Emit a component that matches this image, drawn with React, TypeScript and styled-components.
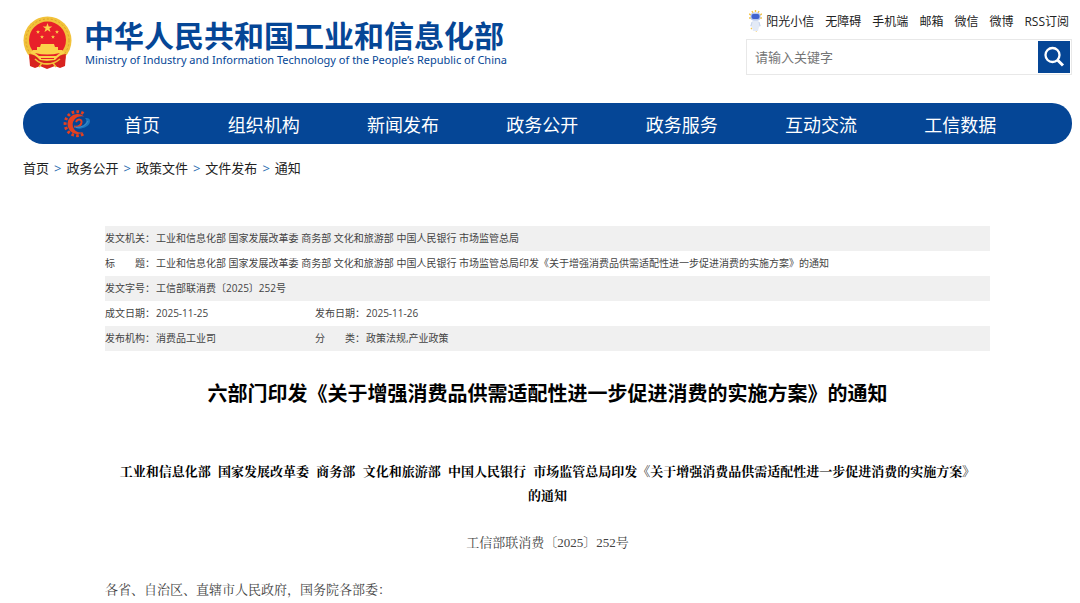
import React from 'react';
import styled, { createGlobalStyle } from 'styled-components';

const BLUE = '#054696';

const GlobalStyle = createGlobalStyle`
  * { box-sizing: border-box; }
  body {
    margin: 0;
    background: #fff;
    color: #222;
    font-family: "Open Sans", "Noto Sans CJK SC", sans-serif;
    font-size: 13px;
  }
  a { color: inherit; text-decoration: none; }
  h1, h2, p { margin: 0; }
`;

const Page = styled.div`
  padding: 0 8px 0 23px;
  height: 100vh;
  overflow: hidden;
`;

const Header = styled.header`
  display: flex;
  justify-content: space-between;
  align-items: flex-start;
  height: 103px;
`;

const Brand = styled.a`
  display: flex;
  gap: 12px;
  padding-top: 16px;
  color: ${BLUE};
`;

const BrandText = styled.div`
  display: flex;
  flex-direction: column;
`;

const BrandName = styled.span`
  font: 700 30px/36px "Noto Sans CJK SC", sans-serif;
  white-space: nowrap;
`;

const BrandEnglish = styled.span`
  font: 400 11px/16px "Noto Sans", sans-serif;
  padding-left: 1px;
  white-space: nowrap;
`;

const Tools = styled.div`
  width: 326px;
`;

const QuickLinks = styled.nav`
  display: flex;
  justify-content: flex-end;
  align-items: center;
  gap: 11px;
  height: 39px;
  padding: 2px 3px 0 0;
  font-size: 12px;
  white-space: nowrap;
`;

const MascotLink = styled.a`
  display: flex;
  align-items: center;
  gap: 4px;
`;

const Search = styled.form`
  display: flex;
  align-items: center;
  height: 36px;
  padding: 1px;
  border: 1px solid #e8e8e8;
`;

const SearchInput = styled.input`
  flex: 1;
  min-width: 0;
  height: 32px;
  padding: 0 7px 2px;
  border: 0;
  outline: 0;
  background: none;
  font: 13px "Noto Sans CJK SC", sans-serif;
  &::placeholder { color: #757575; }
`;

const SearchButton = styled.button`
  display: grid;
  place-items: center;
  width: 32px;
  height: 32px;
  padding: 0;
  border: 0;
  background: ${BLUE};
`;

const NavBar = styled.nav`
  display: flex;
  align-items: center;
  height: 41px;
  padding: 0 42px 0 40px;
  border-radius: 20px;
  background: ${BLUE};
  color: #fff;
  font-size: 18px;
`;

const NavHome = styled.a`
  display: flex;
  align-items: center;
  gap: 33px;
  width: 131px;
`;

const NavItem = styled.a`
  flex: 1;
  text-align: center;
`;

const Crumbs = styled.nav`
  display: flex;
  gap: 5px;
  padding-top: 14px;
  line-height: 20px;
`;

const CrumbArrow = styled.span`
  color: #2a6cb0;
`;

const Article = styled.main`
  margin: 48px 82px 0;
`;

const MetaTable = styled.table`
  width: 100%;
  border-collapse: collapse;
  table-layout: fixed;
  font-size: 10px;
  color: #444;
`;

const MetaRow = styled.tr`
  height: 25px;
  &:nth-child(odd) { background: #f0f0f0; }
`;

const MetaLabel = styled.th`
  padding: 0 0 2px;
  font-weight: 400;
  text-align: left;
  white-space: nowrap;
`;

const MetaValue = styled.td`
  padding: 0 0 2px;
  white-space: nowrap;
`;

const Title = styled.h1`
  padding-top: 28px;
  color: #000;
  font-size: 20px;
  line-height: 30px;
  text-align: center;
`;

const Body = styled.div`
  display: flex;
  flex-direction: column;
  gap: 23px;
  padding-top: 51px;
  font-family: "Liberation Serif", "Noto Serif CJK SC", "Noto Sans CJK SC", serif;
  line-height: 24px;
  color: #444;
`;

const Heading = styled.h2`
  padding: 0 12px;
  color: #000;
  font-size: 13px;
  text-align: center;
`;

const Issuer = styled.span`
  margin-right: 4px;
`;

const DocNumber = styled.p`
  text-align: center;
`;

const STAR = 'M0-5 1.2-1.6 4.8-1.6 1.9.6 3 4 0 1.9-3 4-1.9.6-4.8-1.6-1.2-1.6Z';

const Emblem = () => (
  <svg width="49" height="53" viewBox="0 0 49 53" aria-hidden="true">
    <path d="M6 38 7 50 12 52 17 50 24 53 32 50 37 52 42 50 43 38Z" fill="#d8231f" />
    <circle cx="24.5" cy="24.5" r="24" fill="#f2c23a" />
    <circle cx="24.5" cy="24.5" r="21.5" fill="none" stroke="#dba128" strokeWidth="1" strokeDasharray="2 2" />
    <circle cx="24.5" cy="24" r="18.5" fill="#e8202a" />
    <g fill="#fbd24a">
      <path d={STAR} transform="translate(24.5 12)" />
      <path d={STAR} transform="translate(15 16) scale(.42)" />
      <path d={STAR} transform="translate(34 16) scale(.42)" />
      <path d={STAR} transform="translate(19 21) scale(.42)" />
      <path d={STAR} transform="translate(30 21) scale(.42)" />
      <path d="M18 28h13l1 3h3v3H14v-3h3z" />
      <path d="M10 34h29l3 3-5 2-4 5H16l-4-5-5-2z" />
    </g>
    <path d="M12 37q12 3 25 0l-4 3H16z" fill="#e8202a" />
    <path d="M18 42h13v1H18z" fill="#e8202a" />
    <path d="M6 38q6 0 11 6l7 1 8-1q5-6 11-6l-2 12-6 1-5-4H19l-5 4-6-1z" fill="#d8231f" />
    <path d="M12 43q5 5 12 5t13-5M16 51l3-4M33 51l-3-4" fill="none" stroke="#f2c23a" strokeWidth="1.6" />
  </svg>
);

const Mascot = () => (
  <svg width="13" height="22" viewBox="0 0 13 22" fill="none" aria-hidden="true">
    <path d="M3 1l1 2M6.5 0v2M10 1 9 3M0 4l2 1M13 4l-2 1M0 8h2M11 8h2M6 20l2 1M2 18l1 1" stroke="#f5c445" strokeWidth="1.4" />
    <path d="M4 10h5l3 6-2 1-1 4H4l-1-4-2-1z" fill="#e3eaf6" />
    <path d="M3 12l-1 4M10 12l1 4" stroke="#c6d3ec" />
    <rect x="1.5" y="2.5" width="10" height="8" rx="3.5" fill="#b8c8ee" />
    <rect x="2.5" y="4" width="8" height="5" rx="2" fill="#3f62cf" />
  </svg>
);

const GearLogo = () => (
  <svg width="28" height="28" viewBox="0 0 28 28" fill="none" aria-hidden="true">
    <path d="M20.5 3.5A12 12 0 1 0 21 23.500" stroke="#e5401f" strokeWidth="3" strokeDasharray="2.600 2.200" />
    <path d="M21 6.500A10 10 0 1 0 20.500 22Q14 23.500 11 19Q8 14 11.500 9.500Q15 5.500 21 6.500Z" fill="#e5401f" />
    <path d="M11 16.500Q17.500 17.500 18.500 12.500C19 9 14.500 8.500 13 12" stroke="#e5401f" strokeWidth="2" />
    <path d="M11 16.500C14 21 27 18 27 11c0-2.500-2-3.500-5-3 4 3-1 10.500-11 8.500Z" fill="#1c75bd" />
    <path d="M13 17.500q9 0 12-6.500" stroke="#3f8cca" />
  </svg>
);

const SearchIcon = () => (
  <svg width="22" height="22" viewBox="0 0 22 22" fill="none" stroke="#fff" aria-hidden="true">
    <circle cx="9.5" cy="9" r="7" strokeWidth="2.3" />
    <path d="M14.5 14 20 19.5" strokeWidth="3" />
  </svg>
);

const quickLinks = ['无障碍', '手机端', '邮箱', '微信', '微博', 'RSS订阅'];
const navItems = ['组织机构', '新闻发布', '政务公开', '政务服务', '互动交流', '工信数据'];
const crumbs = ['首页', '政务公开', '政策文件', '文件发布', '通知'];
const issuers = ['工业和信息化部', '国家发展改革委', '商务部', '文化和旅游部', '中国人民银行'];
const issuerLine = issuers.join(' ') + ' 市场监管总局';
const planName = '《关于增强消费品供需适配性进一步促进消费的实施方案》的通知';

const metaRows: string[][] = [
  ['发文机关：', issuerLine],
  ['标　　题：', issuerLine + '印发' + planName],
  ['发文字号：', '工信部联消费〔2025〕252号'],
  ['成文日期：', '2025-11-25', '发布日期：', '2025-11-26'],
  ['发布机构：', '消费品工业司', '分　　类：', '政策法规,产业政策'],
];

export default function App() {
  return (
    <>
      <GlobalStyle />
      <Page>
        <Header>
          <Brand href="#">
            <Emblem />
            <BrandText>
              <BrandName>中华人民共和国工业和信息化部</BrandName>
              <BrandEnglish>
                Ministry of Industry and Information Technology of the People’s Republic of China
              </BrandEnglish>
            </BrandText>
          </Brand>
          <Tools>
            <QuickLinks>
              <MascotLink href="#"><Mascot />阳光小信</MascotLink>
              {quickLinks.map((t) => <a href="#" key={t}>{t}</a>)}
            </QuickLinks>
            <Search onSubmit={(e) => e.preventDefault()}>
              <SearchInput type="text" placeholder="请输入关键字" aria-label="请输入关键字" />
              <SearchButton type="submit" aria-label="搜索"><SearchIcon /></SearchButton>
            </Search>
          </Tools>
        </Header>

        <NavBar>
          <NavHome href="#"><GearLogo />首页</NavHome>
          {navItems.map((t) => <NavItem href="#" key={t}>{t}</NavItem>)}
        </NavBar>

        <Crumbs>
          {crumbs.map((t, i) => (
            <React.Fragment key={t}>
              {i > 0 && <CrumbArrow>&gt;</CrumbArrow>}
              <a href="#">{t}</a>
            </React.Fragment>
          ))}
        </Crumbs>

        <Article>
          <MetaTable>
            <colgroup>
              <col style={{ width: 51 }} />
              <col style={{ width: 159 }} />
              <col style={{ width: 51 }} />
              <col />
            </colgroup>
            <tbody>
              {metaRows.map(([label, value, label2, value2]) => (
                <MetaRow key={label}>
                  <MetaLabel scope="row">{label}</MetaLabel>
                  <MetaValue colSpan={label2 ? 1 : 3}>{value}</MetaValue>
                  {label2 && <MetaLabel scope="row">{label2}</MetaLabel>}
                  {label2 && <MetaValue>{value2}</MetaValue>}
                </MetaRow>
              ))}
            </tbody>
          </MetaTable>

          <Title>{`六部门印发${planName}`}</Title>

          <Body>
            <Heading>
              {issuers.map((t) => <Issuer key={t}>{t} </Issuer>)}
              {`市场监管总局印发${planName}`}
            </Heading>
            <DocNumber>工信部联消费〔2025〕252号</DocNumber>
            <p>各省、自治区、直辖市人民政府，国务院各部委：</p>
          </Body>
        </Article>
      </Page>
    </>
  );
}
